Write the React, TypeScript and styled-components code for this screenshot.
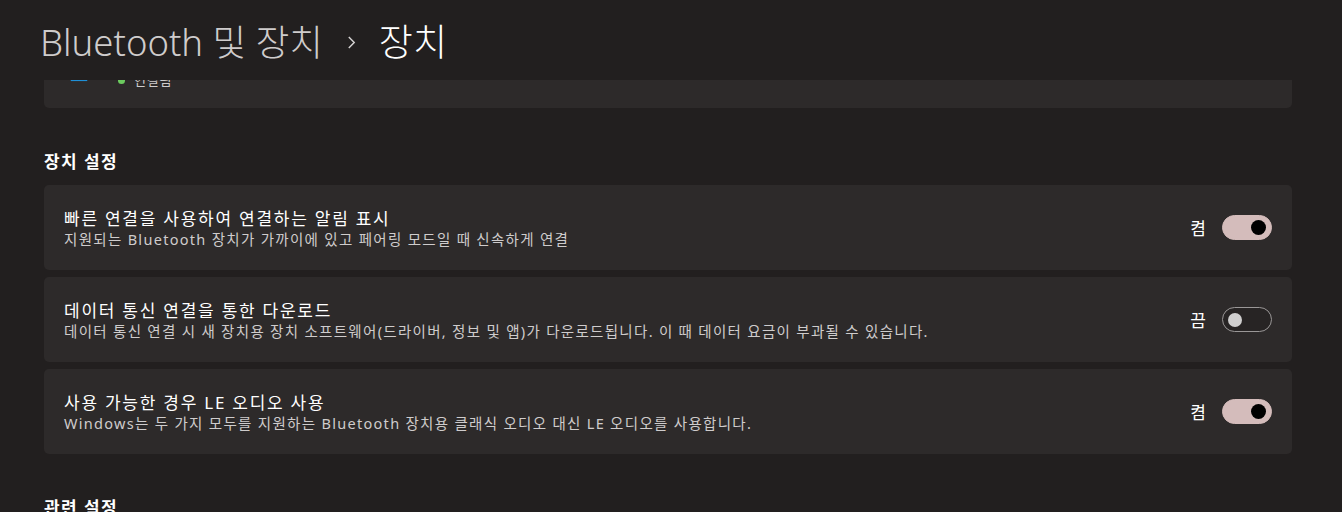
import { useLayoutEffect, useRef } from 'react'
import styled, { createGlobalStyle } from 'styled-components'

const FONT = `"Noto Sans", "Noto Sans CJK KR", sans-serif`

const GlobalStyle = createGlobalStyle`
  html, body {
    margin: 0;
    padding: 0;
    background: #221f1f;
    font-family: ${FONT};
    color: #ffffff;
  }
`

interface Setting {
  title: string
  description: string
  on: boolean
}

const settings: Setting[] = [
  {
    title: '빠른 연결을 사용하여 연결하는 알림 표시',
    description: '지원되는 Bluetooth 장치가 가까이에 있고 페어링 모드일 때 신속하게 연결',
    on: true,
  },
  {
    title: '데이터 통신 연결을 통한 다운로드',
    description:
      '데이터 통신 연결 시 새 장치용 장치 소프트웨어(드라이버, 정보 및 앱)가 다운로드됩니다. 이 때 데이터 요금이 부과될 수 있습니다.',
    on: false,
  },
  {
    title: '사용 가능한 경우 LE 오디오 사용',
    description: 'Windows는 두 가지 모두를 지원하는 Bluetooth 장치용 클래식 오디오 대신 LE 오디오를 사용합니다.',
    on: true,
  },
]

/**
 * 장치 설정 페이지
 */
export default function App() {
  const scrollRef = useRef<HTMLDivElement>(null)

  useLayoutEffect(() => {
    if (scrollRef.current) scrollRef.current.scrollTop = 46
  }, [])

  return (
    <>
      <GlobalStyle />
      <StyledPage>
        <StyledHeader>
          <StyledCrumb>Bluetooth 및 장치</StyledCrumb>
          <StyledChevron viewBox="0 0 10 14" aria-hidden>
            <path d="M2 1 L8 7 L2 13" />
          </StyledChevron>
          <StyledCurrent>장치</StyledCurrent>
        </StyledHeader>

        <StyledScroller ref={scrollRef}>
          <StyledContent>
            <StyledDeviceCard>
              <StyledDeviceIcon viewBox="0 0 24 24" aria-hidden>
                <rect x="3" y="4" width="18" height="14" rx="2" fill="none" stroke="#4cc2ff" strokeWidth="1.6" />
                <path d="M3 22 H21" stroke="#1f8fd6" strokeWidth="2" />
              </StyledDeviceIcon>
              <div>
                <StyledDeviceName>헤드폰</StyledDeviceName>
                <StyledStatus>
                  <StyledDot />
                  연결됨
                </StyledStatus>
              </div>
            </StyledDeviceCard>

            <StyledSectionTitle>장치 설정</StyledSectionTitle>
            <StyledList>
              {settings.map((s) => (
                <SettingRow key={s.title} {...s} />
              ))}
            </StyledList>

            <StyledSectionTitle>관련 설정</StyledSectionTitle>
          </StyledContent>
        </StyledScroller>
      </StyledPage>
    </>
  )
}

/**
 * 설정 행 컴포넌트
 */
const SettingRow = ({ title, description, on }: Setting) => (
  <StyledCard>
    <StyledText>
      <StyledTitle>{title}</StyledTitle>
      <StyledDescription>{description}</StyledDescription>
    </StyledText>
    <StyledControl>
      <StyledState>{on ? '켬' : '끔'}</StyledState>
      <StyledToggle $on={on} role="switch" aria-checked={on}>
        <StyledKnob $on={on} />
      </StyledToggle>
    </StyledControl>
  </StyledCard>
)

const StyledPage = styled.div`
  width: 1342px;
  height: 512px;
  display: flex;
  flex-direction: column;
  overflow: hidden;
  background: #221f1f;
`

const StyledHeader = styled.header`
  height: 80px;
  flex: none;
  display: flex;
  align-items: center;
  padding: 0 0 0 40px;
  box-sizing: border-box;
  font-weight: 300;
`

const StyledCrumb = styled.span`
  font-size: 36.5px;
  color: #cfcccc;
`

const StyledCurrent = styled.span`
  font-size: 37px;
  color: #ffffff;
  font-weight: 300;
`

const StyledChevron = styled.svg`
  width: 9px;
  height: 13px;
  margin: 4px 23px 0 24px;

  path {
    fill: none;
    stroke: #d6d3d3;
    stroke-width: 1.6;
  }
`

const StyledScroller = styled.div`
  flex: 1;
  overflow: hidden;
`

const StyledContent = styled.div`
  padding: 0 50px 40px 44px;
`

const StyledDeviceCard = styled.div`
  height: 74px;
  display: flex;
  align-items: center;
  gap: 28px;
  padding: 0 24px 2px;
  box-sizing: border-box;
  background: #2d2a2a;
  border-radius: 5px;
`

const StyledDeviceIcon = styled.svg`
  width: 22px;
  height: 22px;
  margin-top: 2px;
`

const StyledDeviceName = styled.div`
  font-size: 15px;
  line-height: 20px;
`

const StyledStatus = styled.div`
  display: flex;
  align-items: center;
  gap: 9px;
  font-size: 13px;
  line-height: 18px;
  color: #cfcccc;
  letter-spacing: 0.8px;
`

const StyledDot = styled.span`
  width: 7px;
  height: 7px;
  border-radius: 50%;
  background: #6ccb5f;
`

const StyledSectionTitle = styled.h2`
  margin: 43px 0 12px;
  font-size: 17px;
  line-height: 22px;
  font-weight: 700;
  letter-spacing: 1.4px;
`

const StyledList = styled.div`
  display: flex;
  flex-direction: column;
  gap: 7px;
`

const StyledCard = styled.div`
  height: 85px;
  display: flex;
  align-items: center;
  justify-content: space-between;
  padding: 0 20px;
  box-sizing: border-box;
  background: #2d2a2a;
  border-radius: 5px;
`

const StyledText = styled.div`
  display: flex;
  flex-direction: column;
  padding-top: 1px;
`

const StyledTitle = styled.div`
  font-size: 17px;
  line-height: 23px;
  letter-spacing: 1.75px;
  color: #ffffff;
`

const StyledDescription = styled.div`
  font-size: 14.5px;
  line-height: 19px;
  letter-spacing: 1.3px;
  color: #cfcccc;
`

const StyledControl = styled.div`
  display: flex;
  align-items: center;
  gap: 16px;
`

const StyledState = styled.span`
  font-size: 17px;
  color: #ffffff;
`

const StyledToggle = styled.div<{ $on: boolean }>`
  width: 50px;
  height: 25px;
  box-sizing: border-box;
  border-radius: 13px;
  display: flex;
  align-items: center;
  justify-content: ${(p) => (p.$on ? 'flex-end' : 'flex-start')};
  padding: 0 5px;
  background: ${(p) => (p.$on ? '#d4bcbb' : '#272424')};
  border: 1px solid ${(p) => (p.$on ? '#d4bcbb' : '#9a9797')};
`

const StyledKnob = styled.span<{ $on: boolean }>`
  width: ${(p) => (p.$on ? '15px' : '14px')};
  height: ${(p) => (p.$on ? '15px' : '14px')};
  border-radius: 50%;
  background: ${(p) => (p.$on ? '#000000' : '#d0cfcf')};
`
